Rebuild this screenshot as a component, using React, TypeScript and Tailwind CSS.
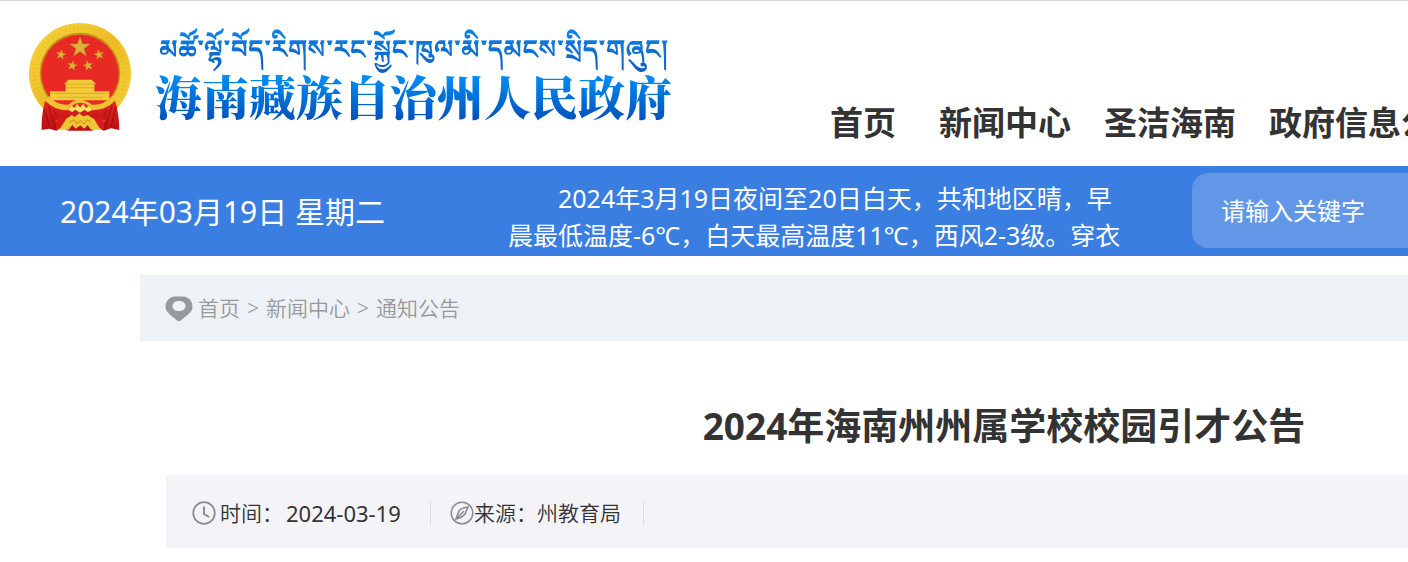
import React from "react";
import type { FC } from "react";

const navItems = ["首页", "新闻中心", "圣洁海南", "政府信息公开"] as const;
const crumbs = ["首页", "新闻中心", "通知公告"] as const;

const STAR = "0,-10 2.4,-3.2 9.5,-3.1 3.8,1.2 5.9,8.1 0,4 -5.9,8.1 -3.8,1.2 -9.5,-3.1 -2.4,-3.2";

const Emblem: FC = () => (
  <svg viewBox="27 22 306 330" className="h-[110px] w-[102px] shrink-0" aria-hidden="true">
    <defs>
      <linearGradient id="gold" x1="0" y1="0" x2="1" y2="1">
        <stop offset="0" stopColor="#f7d63c" />
        <stop offset="0.5" stopColor="#edbd25" />
        <stop offset="1" stopColor="#f5d13c" />
      </linearGradient>
      <linearGradient id="drape" x1="0" y1="0" x2="0" y2="1">
        <stop offset="0" stopColor="#e32722" />
        <stop offset="1" stopColor="#b90f12" />
      </linearGradient>
    </defs>
    <ellipse cx="180" cy="177" rx="153" ry="152" fill="url(#gold)" />
    <ellipse cx="180" cy="177" rx="137" ry="137" fill="none" stroke="#dca51e" strokeWidth="15" strokeDasharray="3 9" opacity="0.3" />
    <ellipse cx="180" cy="176" rx="121" ry="122" fill="#c99019" />
    <ellipse cx="180" cy="177" rx="116" ry="117" fill="#e92a24" />
    <g fill="#deb136" stroke="#b9822a" strokeWidth="0.5">
      <polygon points={STAR} transform="translate(180 98) scale(3.2)" />
      <polygon points={STAR} transform="translate(123 120) rotate(12) scale(1.6)" />
      <polygon points={STAR} transform="translate(237 120) rotate(-12) scale(1.6)" />
      <polygon points={STAR} transform="translate(157 153) rotate(12) scale(1.6)" />
      <polygon points={STAR} transform="translate(204 153) rotate(-12) scale(1.6)" />
    </g>
    <path d="M145 195H215L228 208H132ZM137 208H223V230H268V257H90V230H137Z" fill="#f4cc3b" />
    <path d="M132 208H228M138 219H222M90 236H268M112 248H248" stroke="#d99b20" strokeWidth="2" />
    <path d="M75 259Q63 305 65 346L88 342L108 348L125 339L145 348H215L234 339L252 348L273 341L298 346Q298 300 285 257L250 279L216 285H143L108 279Z" fill="url(#drape)" />
    <path d="M72 284L91 341M85 274L107 342M101 286L125 335M260 286L235 337M276 274L253 342M288 276L273 338" stroke="#95090d" strokeWidth="4" opacity="0.6" />
    <path d="M76 258Q106 288 143 287L154 274Q181 255 207 274L218 287Q259 286 287 257L278 243Q248 273 216 270Q178 240 145 270Q112 272 84 244Z" fill="#efc231" />
    <path d="M144 286L155 273L164 280L171 267L180 279L190 267L197 280L207 273L217 286L203 292L194 285L180 294L166 285L157 292Z" fill="#fae361" />
    <path d="M107 317L144 309L155 301L165 307L177 296L190 305L204 301L216 310L254 317L241 345H213L203 331L193 342L181 332L167 342L157 331L146 345H119Z" fill="#f0c633" />
    <path d="M148 322L162 315L171 328L181 317L192 328L201 315L213 323" fill="none" stroke="#c88915" strokeWidth="3" />
    <path d="M109 305L140 310L122 339L108 348M251 305L220 310L238 339L252 348" fill="#d51c1b" />
  </svg>
);

const PinIcon: FC = () => (
  <svg viewBox="0 0 28 26" className="h-[26px] w-7" aria-hidden="true">
    <path
      fillRule="evenodd"
      fill="#999"
      d="M9 0.500H19C24 1.500 27.500 5 27.500 11C27.500 16 22 19 16 24.500Q14 26 12 24.500C6 19 0.500 16 0.500 11C0.500 5 4 1.500 9 0.500ZM14 5C10 5 7.500 7 7.500 10S10 15 14 15S20.500 13 20.500 10S18 5 14 5Z"
    />
  </svg>
);

const ClockIcon: FC = () => (
  <svg viewBox="0 0 24 24" className="size-6" fill="none" stroke="#8d8d90" aria-hidden="true">
    <circle cx="12" cy="12" r="10.800" strokeWidth="1.800" />
    <path d="M12 5.500V13L17 16" strokeWidth="2" />
  </svg>
);

const CompassIcon: FC = () => (
  <svg viewBox="0 0 24 24" className="size-6" fill="none" stroke="#8d8d90" aria-hidden="true">
    <circle cx="12" cy="12" r="10.800" strokeWidth="1.500" />
    <path d="M18 6Q11 7 9 10L6 18Q13 16 15 13ZM6 18L14 10" strokeWidth="1.600" />
  </svg>
);

const Header: FC = () => (
  <header className="flex h-[166px] border-t border-[#d9d9d9]">
    <a href="#" className="flex w-[801px] shrink-0 items-start gap-6 pt-[21px] pl-[29px]">
      <Emblem />
      <span className="flex flex-col">
        <span
          lang="bo"
          className="h-14 bg-linear-to-b from-[#0b8af0] to-[#1258b8] bg-clip-text pt-[15px] pl-1 font-['Noto_Serif_Tibetan',serif] text-[26px] leading-10 font-bold whitespace-nowrap text-transparent"
        >
          མཚོ་ལྷོ་བོད་རིགས་རང་སྐྱོང་ཁུལ་མི་དམངས་སྲིད་གཞུང།
        </span>
        <span className="-mt-[10px] bg-linear-to-b from-[#0598ff] to-[#0050b8] bg-clip-text font-['Noto_Serif_CJK_SC','Noto_Sans_CJK_SC',serif] text-[47px] leading-[54px] font-black whitespace-nowrap text-transparent">
          海南藏族自治州人民政府
        </span>
      </span>
    </a>
    <nav className="pt-[98px] pl-[29px]">
      <ul className="flex gap-[33px] text-[33px] leading-12 font-bold whitespace-nowrap text-[#333]">
        {navItems.map((item) => (
          <li key={item} className="first:mr-[10px]">
            <a href="#">{item}</a>
          </li>
        ))}
      </ul>
    </nav>
  </header>
);

const InfoBar: FC = () => (
  <section className="flex h-[90px] bg-[#3a7ee1] text-white">
    <time dateTime="2024-03-19" className="w-[508px] shrink-0 pl-[60px] text-[30px] leading-[92px] whitespace-nowrap">
      2024年03月19日 星期二
    </time>
    <p className="w-[684px] shrink-0 pt-[14px] text-[25px] leading-[37px] whitespace-nowrap">
      <span className="block pl-[50px]">2024年3月19日夜间至20日白天，共和地区晴，早</span>
      <span className="block">晨最低温度-6℃，白天最高温度11℃，西风2-3级。穿衣</span>
    </p>
    <form className="pt-[7px]">
      <input
        type="text"
        aria-label="请输入关键字"
        placeholder="请输入关键字"
        className="h-[75px] w-[400px] rounded-2xl bg-[#6297e8] pl-[29px] text-2xl text-white placeholder:text-white"
      />
    </form>
  </section>
);

const Article: FC = () => (
  <main className="mt-[19px] ml-[140px] w-[1728px]">
    <nav className="flex h-[66px] items-center bg-[#edf2f7] pt-[2px] pl-[25px] text-[21px] text-[#999]">
      <PinIcon />
      <ol className="flex gap-[7px] pl-[5px] font-[350]">
        {crumbs.map((crumb, i) => (
          <li key={crumb} className="flex gap-[7px]">
            {i > 0 && <span>&gt;</span>}
            <a href="#">{crumb}</a>
          </li>
        ))}
      </ol>
    </nav>
    <div className="px-[26px]">
      <h1 className="pt-[58px] text-center text-[37px] leading-[54px] font-bold text-[#333]">
        2024年海南州州属学校校园引才公告
      </h1>
      <div className="mt-[22px] flex h-[73px] items-center bg-[#f3f3f8] pt-[2px] pl-[26px] text-[21px] leading-6 font-[350] text-[#333]">
        <div className="flex w-[239px] items-center border-r border-[#ddd]">
          <ClockIcon />
          <span className="pl-1">时间：</span>
          <time dateTime="2024-03-19" className="pl-[3px] text-[22px] font-normal">
            2024-03-19
          </time>
        </div>
        <div className="flex w-[213px] items-center border-r border-[#ddd] pl-[19px]">
          <CompassIcon />
          <span>来源：州教育局</span>
        </div>
      </div>
    </div>
  </main>
);

const App: FC = () => (
  <div className="overflow-hidden bg-white pb-4 font-['Noto_Sans','Noto_Sans_CJK_SC',sans-serif]">
    <Header />
    <InfoBar />
    <Article />
  </div>
);

export default App;
